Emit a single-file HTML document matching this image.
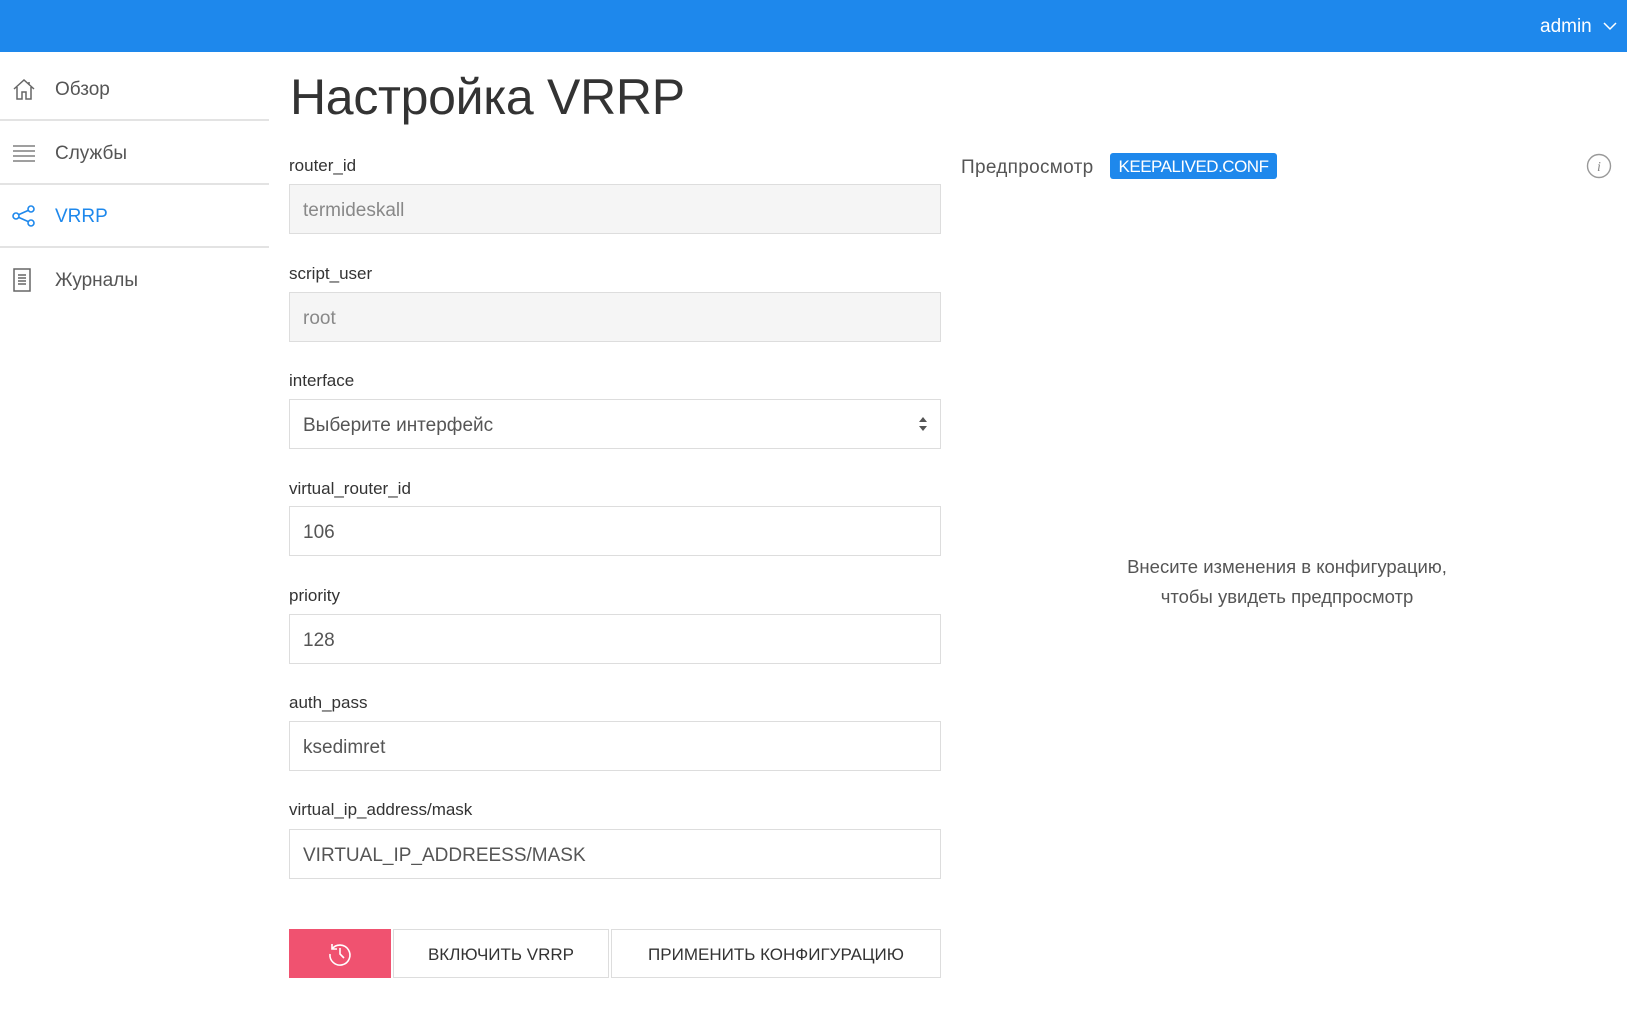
<!DOCTYPE html>
<html><head><meta charset="utf-8"><style>
*{box-sizing:border-box;margin:0;padding:0}
body{width:1627px;height:1010px;overflow:hidden;background:#fff;font-family:"Liberation Sans","DejaVu Sans",sans-serif;color:#333;position:relative}
.hdr{position:absolute;left:0;top:0;width:1627px;height:52px;background:#1e88ec}
.admin{position:absolute;left:1540px;top:16px;color:#fff;font-size:19px}
.nav{position:absolute;left:0;width:269px;height:62px;font-size:19px;color:#555}
.nav span{position:absolute;left:55px;top:50%;transform:translateY(-46%)}
.nav svg{position:absolute;left:12px;top:50%;transform:translateY(-50%)}
.div{position:absolute;left:0;width:269px;height:2px;background:#e3e3e3}
h1{position:absolute;left:290px;top:68px;font-weight:normal;font-size:50px;letter-spacing:-0.3px;color:#333}
.lbl{position:absolute;left:289px;font-size:17px;color:#333;margin-top:2px}
.inp{position:absolute;left:289px;width:652px;height:50px;border:1px solid #ddd;font-size:19px;color:#555;padding:0 13px;line-height:52px}
.inp.dis{background:#f5f5f5;color:#888}
.btn{position:absolute;top:929px;height:49px;border:1px solid #ddd;font-size:17px;color:#333;text-align:center;line-height:49px}
</style></head><body>
<div class="hdr"><div class="admin">admin <svg width="14" height="9" viewBox="0 0 14 9" style="margin-left:6px;vertical-align:middle"><path d="M1 1l6 6 6-6" stroke="#fff" stroke-width="1.5" fill="none"/></svg></div></div>

<div class="nav" style="top:58px"><svg width="24" height="22" viewBox="0 0 24 22"><path d="M2 11L12 2l10 9M5 9v12h5v-7h4v7h5V9M17 4v3" stroke="#666" stroke-width="1.5" fill="none"/></svg><span>Обзор</span></div>
<div class="div" style="top:119px"></div>
<div class="nav" style="top:122px"><svg width="24" height="18" viewBox="0 0 24 18"><path d="M1 2h22M1 7h22M1 12h22M1 17h22" stroke="#666" stroke-width="1.3"/></svg><span>Службы</span></div>
<div class="div" style="top:183px"></div>
<div class="nav" style="top:185px;color:#1e88ec"><svg width="24" height="22" viewBox="0 0 24 22"><g stroke="#1e88ec" stroke-width="1.6" fill="none"><circle cx="4" cy="11" r="3"/><circle cx="19" cy="4" r="3"/><circle cx="19" cy="18" r="3"/><path d="M7 9.5l9-4M7 12.5l9 4"/></g></svg><span>VRRP</span></div>
<div class="div" style="top:246px"></div>
<div class="nav" style="top:249px"><svg width="20" height="24" viewBox="0 0 20 24"><path d="M2 1h16v22H2z M6 7h8M6 10h8M6 13h8M6 16h8" stroke="#666" stroke-width="1.5" fill="none"/></svg><span>Журналы</span></div>

<h1>Настройка VRRP</h1>

<div class="lbl" style="top:154px">router_id</div>
<div class="inp dis" style="top:184px">termideskall</div>
<div class="lbl" style="top:262px">script_user</div>
<div class="inp dis" style="top:292px">root</div>
<div class="lbl" style="top:369px">interface</div>
<div class="inp" style="top:399px">Выберите интерфейс<svg width="10" height="14" viewBox="0 0 10 14" style="position:absolute;right:12px;top:17px"><path d="M5 0l4 5H1zM5 14l4-5H1z" fill="#555"/></svg></div>
<div class="lbl" style="top:477px">virtual_router_id</div>
<div class="inp" style="top:506px">106</div>
<div class="lbl" style="top:584px">priority</div>
<div class="inp" style="top:614px">128</div>
<div class="lbl" style="top:691px">auth_pass</div>
<div class="inp" style="top:721px">ksedimret</div>
<div class="lbl" style="top:798px">virtual_ip_address/mask</div>
<div class="inp" style="top:829px">VIRTUAL_IP_ADDREESS/MASK</div>

<div class="btn" style="left:289px;width:102px;background:#f05270;border-color:#f05270"><svg width="26" height="26" viewBox="0 0 26 26" style="margin-top:11px"><g stroke="#fff" stroke-width="1.6" fill="none"><path d="M5 8A10 10 0 1 1 3 13"/><path d="M5 3v5h5" /><path d="M13 7v6l4 4"/></g></svg></div>
<div class="btn" style="left:393px;width:216px">ВКЛЮЧИТЬ VRRP</div>
<div class="btn" style="left:611px;width:330px">ПРИМЕНИТЬ КОНФИГУРАЦИЮ</div>

<div style="position:absolute;left:961px;top:157px;font-size:19px;color:#555;letter-spacing:0.3px">Предпросмотр</div>
<div style="position:absolute;left:1110px;top:153px;width:167px;height:26px;background:#1e88ec;border-radius:3px;color:#fff;font-size:17px;text-align:center;line-height:27px;letter-spacing:-0.5px">KEEPALIVED.CONF</div>
<svg width="26" height="26" viewBox="0 0 26 26" style="position:absolute;left:1586px;top:153px"><circle cx="13" cy="13" r="11.5" stroke="#999" stroke-width="1.4" fill="none"/><text x="13" y="18" font-size="14" font-style="italic" fill="#888" text-anchor="middle" font-family="Liberation Serif">i</text></svg>

<div style="position:absolute;left:1087px;width:400px;top:552px;text-align:center;font-size:18.5px;line-height:30px;color:#555">Внесите изменения в конфигурацию,<br>чтобы увидеть предпросмотр</div>
</body></html>
